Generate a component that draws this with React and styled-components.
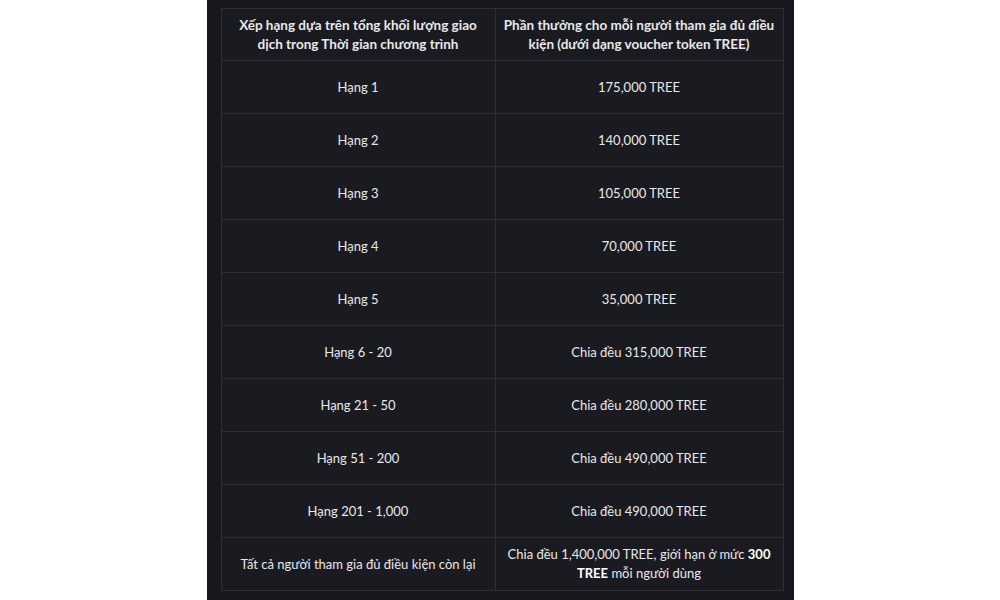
import React from 'react';
import styled, { createGlobalStyle } from 'styled-components';

const GlobalStyle = createGlobalStyle`
    html, body {
        margin: 0;
        padding: 0;
        background: #ffffff;
    }
`;

const rows = [
    ['Hạng 1', '175,000 TREE'],
    ['Hạng 2', '140,000 TREE'],
    ['Hạng 3', '105,000 TREE'],
    ['Hạng 4', '70,000 TREE'],
    ['Hạng 5', '35,000 TREE'],
    ['Hạng 6 - 20', 'Chia đều 315,000 TREE'],
    ['Hạng 21 - 50', 'Chia đều 280,000 TREE'],
    ['Hạng 51 - 200', 'Chia đều 490,000 TREE'],
    ['Hạng 201 - 1,000', 'Chia đều 490,000 TREE'],
];

export default function App() {
    return (
        <Page>
            <GlobalStyle />
            <Panel>
                <Table>
                    <colgroup>
                        <col style={{ width: 274 }} />
                        <col style={{ width: 288 }} />
                    </colgroup>
                    <thead>
                        <tr>
                            <Head>Xếp hạng dựa trên tổng khối lượng giao dịch trong Thời gian chương trình</Head>
                            <Head>Phần thưởng cho mỗi người tham gia đủ điều kiện (dưới dạng voucher token TREE)</Head>
                        </tr>
                    </thead>
                    <tbody>
                        {rows.map(([rank, reward]) => (
                            <tr key={rank}>
                                <Cell>{rank}</Cell>
                                <Cell>{reward}</Cell>
                            </tr>
                        ))}
                        <tr>
                            <Cell>Tất cả người tham gia đủ điều kiện còn lại</Cell>
                            <Cell $wrap>
                                Chia đều 1,400,000 TREE, giới hạn ở mức <b>300</b>
                                <br />
                                <b>TREE</b> mỗi người dùng
                            </Cell>
                        </tr>
                    </tbody>
                </Table>
            </Panel>
        </Page>
    );
}

const Page = styled.div`
    width: 1000px;
    height: 600px;
    overflow: hidden;
    display: flex;
    justify-content: center;
    background: #ffffff;
`;

const Panel = styled.div`
    width: 587px;
    height: 600px;
    background: #17181d;
    padding: 8px 11px 0 14px;
    box-sizing: border-box;
`;

const Table = styled.table`
    width: 562px;
    border-collapse: collapse;
    table-layout: fixed;
    font-family: Lato, "Noto Sans", sans-serif;
    font-size: 13px;
    line-height: 19px;
    color: #e8e8ea;
    background: #1a1b20;
`;

const Head = styled.th`
    height: 52px;
    padding: 0 8px;
    box-sizing: border-box;
    border: 1px solid #2d2f36;
    font-size: 13.5px;
    font-weight: 700;
    text-align: center;
    vertical-align: middle;
`;

const Cell = styled.td`
    height: 53px;
    padding: 0 ${(p) => (p.$wrap ? '8px' : '14px')};
    box-sizing: border-box;
    border: 1px solid #2d2f36;
    text-align: center;
    vertical-align: middle;

    b {
        font-weight: 700;
        color: #ffffff;
    }
`;
